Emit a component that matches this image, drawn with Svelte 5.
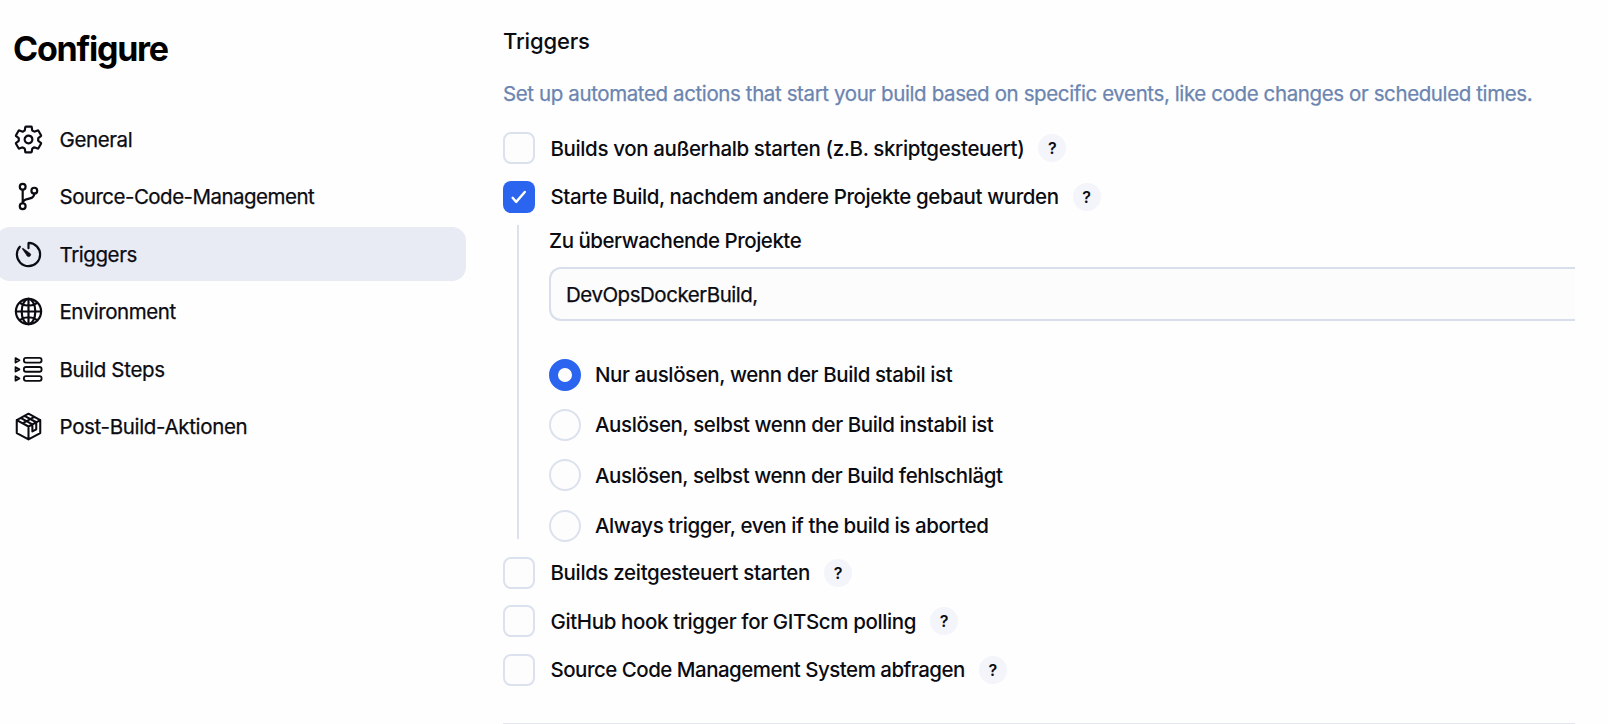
<script>
  const nav = [
    { icon: 'gear', label: 'General', track: -0.4 },
    { icon: 'branch', label: 'Source-Code-Management', track: -0.52 },
    { icon: 'timer', label: 'Triggers', track: -0.42, active: true },
    { icon: 'globe', label: 'Environment', track: -0.45 },
    { icon: 'steps', label: 'Build Steps', track: -0.32 },
    { icon: 'package', label: 'Post-Build-Aktionen', track: -0.33 }
  ];
  const before = [
    { label: 'Builds von außerhalb starten (z.B. skriptgesteuert)', track: -0.38 },
    { label: 'Starte Build, nachdem andere Projekte gebaut wurden', track: -0.41 , checked: true }
  ];
  const after = [
    { label: 'Builds zeitgesteuert starten', track: -0.35 },
    { label: 'GitHub hook trigger for GITScm polling', track: -0.38 },
    { label: 'Source Code Management System abfragen', track: -0.51 }
  ];
  const radios = [
    { label: 'Nur auslösen, wenn der Build stabil ist', track: -0.41, checked: true },
    { label: 'Auslösen, selbst wenn der Build instabil ist', track: -0.42 },
    { label: 'Auslösen, selbst wenn der Build fehlschlägt', track: -0.44 },
    { label: 'Always trigger, even if the build is aborted', track: -0.42 }
  ];
</script>

{#snippet check(item)}
  <div class="check">
    <span class="box" class:on={item.checked}>
      {#if item.checked}
        <svg viewBox="0 0 32 32" width="32" height="32"><path d="M9.6 16.8l3.6 4.1L21.8 11" fill="none" stroke="#fff" stroke-width="2.4" stroke-linecap="round" stroke-linejoin="round" /></svg>
      {/if}
    </span>
    <span class="label" style="letter-spacing:{item.track}px">{item.label}</span>
    <span class="help">?</span>
  </div>
{/snippet}

<div class="page">
  <aside>
    <h1>Configure</h1>
    <nav>
      {#each nav as n}
        <div class="item" class:active={n.active}>
          <svg class="icon {n.icon}" viewBox="0 0 512 512">
            {#if n.icon === 'gear'}
              <path d="M262.29 192.31a64 64 0 1057.4 57.4 64.13 64.13 0 00-57.4-57.4zM416.39 256a154.34 154.34 0 01-1.53 20.79l45.21 35.46a10.81 10.81 0 012.45 13.75l-42.77 74a10.81 10.81 0 01-13.14 4.59l-44.9-18.08a16.11 16.11 0 00-15.17 1.75A164.48 164.48 0 01325 400.8a15.94 15.94 0 00-8.82 12.14l-6.73 47.89a11.08 11.08 0 01-10.68 9.17h-85.54a11.11 11.11 0 01-10.69-8.87l-6.72-47.82a16.07 16.07 0 00-9-12.22 155.3 155.3 0 01-21.46-12.57 16 16 0 00-15.11-1.71l-44.89 18.07a10.81 10.81 0 01-13.14-4.58l-42.77-74a10.8 10.8 0 012.45-13.75l38.21-30a16.05 16.05 0 006-14.08c-.36-4.17-.58-8.33-.58-12.5s.21-8.27.58-12.35a16 16 0 00-6.07-13.94l-38.19-30A10.81 10.81 0 0149.48 186l42.77-74a10.81 10.81 0 0113.14-4.59l44.9 18.08a16.11 16.11 0 0015.17-1.75A164.48 164.48 0 01187 111.2a15.94 15.94 0 008.82-12.14l6.73-47.89A11.08 11.08 0 01213.23 42h85.54a11.11 11.11 0 0110.69 8.87l6.72 47.82a16.07 16.07 0 009 12.22 155.3 155.3 0 0121.46 12.57 16 16 0 0015.11 1.71l44.89-18.07a10.81 10.81 0 0113.14 4.58l42.77 74a10.8 10.8 0 01-2.45 13.75l-38.21 30a16.05 16.05 0 00-6.05 14.08c.33 4.14.55 8.3.55 12.47z" />
            {:else if n.icon === 'branch'}
              <circle cx="160" cy="96" r="48" /><circle cx="160" cy="416" r="48" /><circle cx="352" cy="160" r="48" />
              <path d="M160 368V144M352 208c0 128-192 48-192 160" />
            {:else if n.icon === 'timer'}
              <path d="M112.91 128A191.85 191.85 0 0064 254c-1.18 106.35 85.65 193.8 192 194 106.2.2 192-85.83 192-192 0-104.54-83.55-189.61-187.5-192a4.36 4.36 0 00-4.5 4.37V152" />
              <path class="solid" d="M233.38 278.63l-79-113a8.13 8.13 0 0111.32-11.32l113 79a32.5 32.5 0 01-37.25 53.26 33.21 33.21 0 01-8.07-7.94z" />
            {:else if n.icon === 'globe'}
              <circle cx="256" cy="256" r="208" />
              <path d="M256 48c-58.07 0-112.67 93.13-112.67 208S197.93 464 256 464s112.67-93.13 112.67-208S314.07 48 256 48z" />
              <path d="M117.33 117.33c38.24 27.15 86.38 43.34 138.67 43.34s100.43-16.19 138.67-43.34M394.67 394.67c-38.24-27.15-86.38-43.34-138.67-43.34s-100.43 16.19-138.67 43.34M256 48v416M464 256H48" />
            {:else if n.icon === 'steps'}
              {#each [104, 254, 404] as y}
                <path d="M42 {y - 36}L106 {y}L42 {y + 36}Z" />
                <rect x="180" y={y - 39} width="292" height="78" rx="34" />
              {/each}
            {:else}
              <path d="M256 44L450 150V364L256 470L62 364V150ZM62 150L256 256L450 150M256 256V470M126 115L320 221M190 80L384 186M320 221V338L384 302V186M158 203L352 97" />
            {/if}
          </svg>
          <span style="letter-spacing:{n.track}px">{n.label}</span>
        </div>
      {/each}
    </nav>
  </aside>

  <main>
    <h2>Triggers</h2>
    <p class="desc">Set up automated actions that start your build based on specific events, like code changes or scheduled times.</p>
    <div class="checks">
      {#each before as item}{@render check(item)}{/each}
    </div>
    <div class="nested">
      <div class="field-label">Zu überwachende Projekte</div>
      <div class="field">DevOpsDockerBuild,</div>
      <div class="radios">
        {#each radios as r}
          <div class="radio">
            <span class="dot" class:on={r.checked}></span>
            <span style="letter-spacing:{r.track}px">{r.label}</span>
          </div>
        {/each}
      </div>
    </div>
    <div class="checks last">
      {#each after as item}{@render check(item)}{/each}
    </div>
    <div class="rule"></div>
  </main>
</div>

<style>
  :global(body) { background: #fefefe; overflow: hidden; }
  .page {
    display: flex;
    width: 1575px;
    height: 724px;
    overflow: hidden;
    font-family: Inter, "Liberation Sans", sans-serif;
    font-size: 20.5px;
    color: #0b0b12;
    white-space: nowrap;
  }
  aside { width: 503px; flex: none; }
  h1 {
    margin: 28px 0 0 13px;
    font-size: 34px;
    line-height: 42px;
    font-weight: 700;
    letter-spacing: -1.25px;
    color: #000;
  }
  nav { display: flex; flex-direction: column; gap: 3.6px; margin: 42px 0 0 -4px; }
  .item {
    box-sizing: border-box;
    display: flex;
    align-items: center;
    gap: 15.5px;
    width: 469.5px;
    height: 54px;
    padding-left: 17px;
    border-radius: 14px;
  }
  .item.active { background: #e8ebf4; }
  .item span { -webkit-text-stroke: 0.25px; }
  .icon { width: 31px; height: 31px; fill: none; stroke: #0b0b12; stroke-width: 36; stroke-linecap: round; stroke-linejoin: round; }
  .icon.steps { stroke-width: 30; }
  .icon.package { stroke-width: 34; }
  .icon .solid { fill: #0b0b12; stroke-width: 8; }
  main { flex: 1; min-width: 0; }
  h2 { margin: 27px 0 0; font-size: 22px; line-height: 28px; font-weight: 500; letter-spacing: -0.15px; }
  .desc { margin: 25px 0 0; line-height: 28px; color: #6b85b0; letter-spacing: -0.39px; -webkit-text-stroke: 0.25px; }
  .checks { display: flex; flex-direction: column; gap: 16.5px; margin-top: 24px; font-weight: 500; }
  .check { display: flex; align-items: center; height: 32px; }
  .box {
    box-sizing: border-box;
    width: 32px;
    height: 32px;
    margin-right: 15.5px;
    border: 2px solid #dce1ee;
    border-radius: 8px;
    background: #fdfdfe;
  }
  .box.on { border: 0; background: #2b64ee; }
  .box svg { display: block; }
  .help {
    width: 28px;
    height: 28px;
    margin-left: 14px;
    border-radius: 50%;
    background: #f3f5fa;
    text-align: center;
    font-size: 16px;
    line-height: 28px;
    font-weight: 600;
  }
  .nested { margin: 12.5px 0 0 14px; padding-left: 30px; border-left: 2px solid #dce1ee; height: 314px; font-weight: 500; }
  .field-label { padding-top: 2px; line-height: 28px; letter-spacing: -0.49px; }
  .field {
    box-sizing: border-box;
    height: 54px;
    margin-top: 12px;
    padding-left: 15px;
    border: 2px solid #d8deeb;
    border-right: 0;
    border-radius: 12px 0 0 12px;
    background: #fcfcfd;
    line-height: 51px;
    font-weight: 400;
    letter-spacing: -0.48px;
    -webkit-text-stroke: 0.25px;
  }
  .radios { display: flex; flex-direction: column; gap: 18.4px; margin-top: 37.5px; }
  .radio { display: flex; align-items: center; gap: 14px; height: 32px; }
  .dot { box-sizing: border-box; width: 32px; height: 32px; border: 2px solid #dce1ee; border-radius: 50%; background: #fdfdfe; }
  .dot.on { border: 9.5px solid #2b64ee; background: #fff; }
  .checks.last { margin-top: 17.5px; }
  .rule { margin-top: 37px; height: 1px; background: #e4e7ee; }
</style>
